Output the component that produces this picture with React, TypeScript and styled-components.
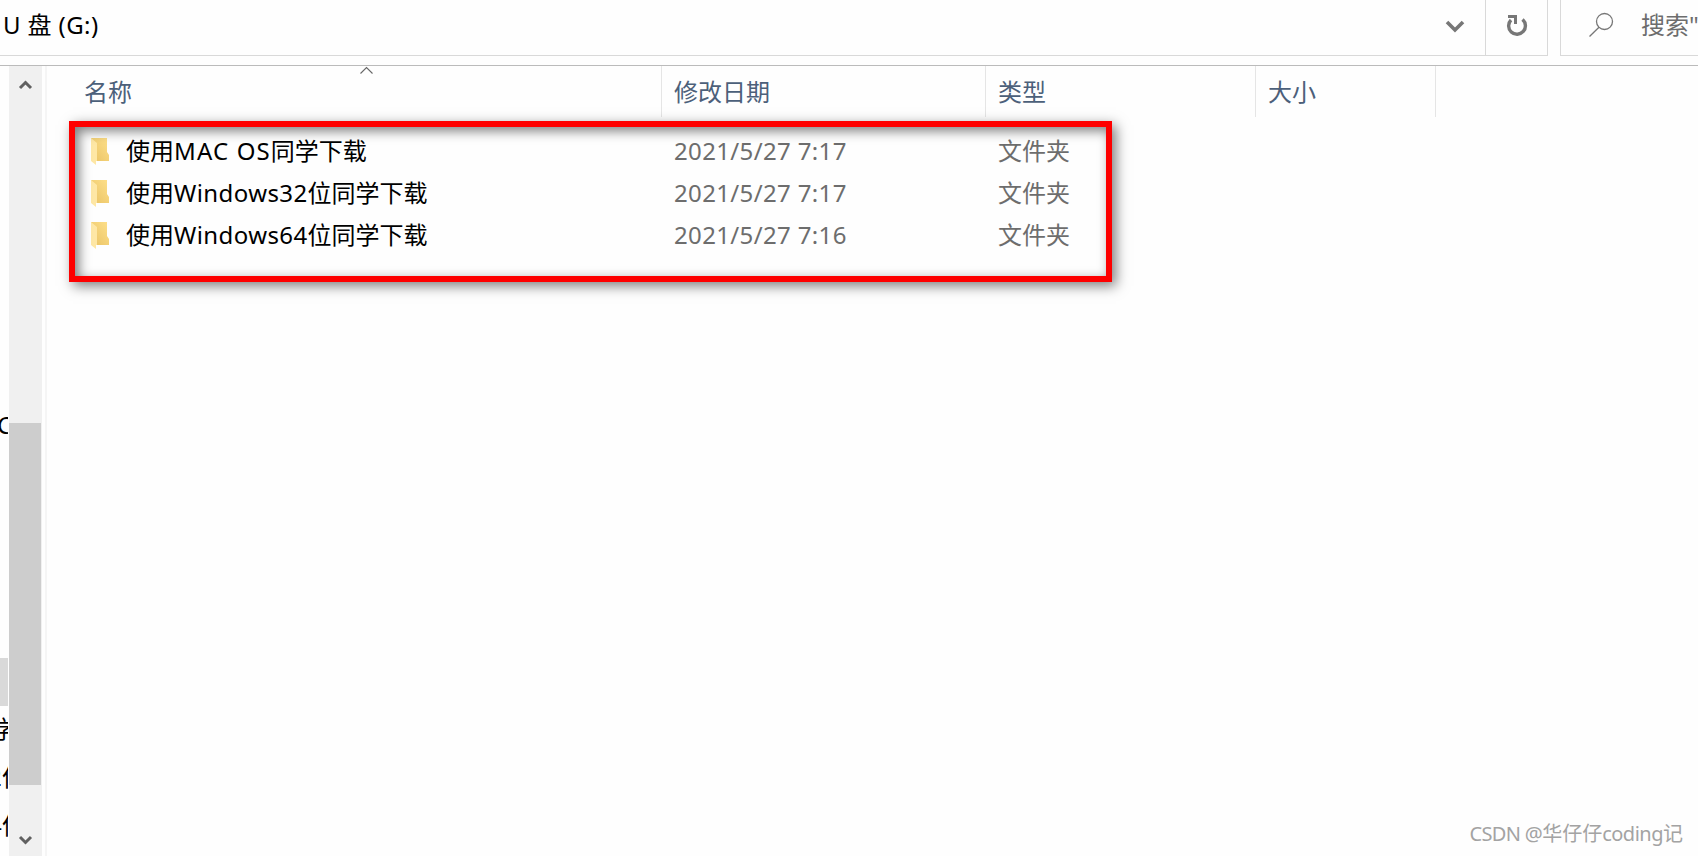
import React from "react";
import styled, { createGlobalStyle, css } from "styled-components";

const files = [
  { prefix: "使用", latin: "MAC OS", suffix: "同学下载", spacing: 1.15, date: "2021/5/27 7:17" },
  { prefix: "使用", latin: "Windows32", suffix: "位同学下载", spacing: 0.4, date: "2021/5/27 7:17" },
  { prefix: "使用", latin: "Windows64", suffix: "位同学下载", spacing: 0.4, date: "2021/5/27 7:16" },
];

const GlobalStyle = createGlobalStyle`
  * {
    box-sizing: border-box;
  }

  body {
    margin: 0;
    overflow: hidden;
    background: #fefefe;
    font-family: "Noto Sans", "Noto Sans CJK SC", sans-serif;
    font-size: 24px;
    color: #000;
  }
`;

const Window = styled.div`
  position: relative;
  display: flex;
  flex-direction: column;
  width: 1698px;
  height: 856px;
  overflow: hidden;
`;

const TopBar = styled.header`
  display: flex;
  gap: 12px;
  height: 66px;
  padding-bottom: 9px;
  border-bottom: 1px solid #bbbbbb;
`;

const AddressBox = styled.div`
  display: flex;
  width: 1548px;
  border: solid #d9d9d9;
  border-width: 0 1px 1px 0;
`;

const Path = styled.span`
  flex: 1;
  padding-left: 3px;
  line-height: 50px;
  letter-spacing: 0.4px;
  white-space: pre;
`;

const BarButton = styled.div<{ $width: number; $divided?: boolean }>`
  display: flex;
  width: ${({ $width }) => $width}px;
  ${({ $divided }) =>
    $divided &&
    css`
      border-left: 1px solid #d9d9d9;
    `}
`;

const SearchBox = styled.div`
  display: flex;
  flex: 1;
  border: solid #d9d9d9;
  border-width: 0 0 1px 1px;
  color: #6d6d6d;
  line-height: 50px;
  white-space: nowrap;
  overflow: hidden;

  > svg {
    width: 80px;
    flex-shrink: 0;
  }
`;

const Main = styled.div`
  display: flex;
  flex: 1;
  min-height: 0;
`;

const Nav = styled.nav`
  width: 9px;
  padding-top: 336px;
  overflow: hidden;
`;

const NavItem = styled.div<{ $shift?: number; $gap?: number }>`
  width: 8px;
  height: 48px;
  margin-bottom: ${({ $gap = 0 }) => $gap}px;
  line-height: 46px;
  text-indent: ${({ $shift = 0 }) => $shift}px;
  white-space: nowrap;
  overflow: hidden;
`;

const SelectedItem = styled(NavItem)`
  background: #d9d9d9;
`;

const ScrollBar = styled.div`
  display: flex;
  flex-direction: column;
  width: 33px;
  background: #f0f0f0;
`;

const ScrollTrack = styled.div`
  flex: 1;
  padding-top: 320px;
`;

const Thumb = styled.div`
  width: 32px;
  height: 362px;
  background: #cdcdcd;
`;

const ScrollArrow = styled.svg`
  display: block;
  width: 33px;
  height: 37px;
`;

const Pane = styled.section`
  flex: 1;
  margin-left: 3px;
  border-left: 2px solid #f5f5f5;
`;

const columns = css`
  display: grid;
  grid-template-columns: 615px 324px 270px 180px;
`;

const ColumnHeader = styled.div`
  ${columns}
  height: 51px;
  color: #4c607a;
`;

const HeaderCell = styled.div<{ $indent?: number }>`
  position: relative;
  padding-left: ${({ $indent = 12 }) => $indent}px;
  border-right: 1px solid #e5e5e5;
  line-height: 51px;
`;

const SortMark = styled.svg`
  position: absolute;
  left: 312px;
  top: 0;
`;

const Rows = styled.div`
  padding-top: 14px;
`;

const Row = styled.div`
  ${columns}
  height: 42px;
  line-height: 40px;
  white-space: nowrap;
`;

const NameCell = styled.div`
  display: flex;
  padding-left: 44px;
`;

const FolderSvg = styled.svg`
  width: 20px;
  height: 28px;
  margin: 7px 15px 0 0;
`;

const DetailCell = styled.div`
  padding-left: 12px;
  color: #6d6d6d;
`;

const Latin = styled.span<{ $spacing: number }>`
  letter-spacing: ${({ $spacing }) => $spacing}px;
`;

const Highlight = styled.div`
  position: absolute;
  left: 69px;
  top: 121px;
  width: 1043px;
  height: 161px;
  border: 6px solid #fe0000;
  box-shadow:
    4px 4px 12px rgba(0, 0, 0, 0.5),
    inset 4px 4px 12px rgba(0, 0, 0, 0.5);
`;

const Watermark = styled.div`
  position: absolute;
  right: 15px;
  bottom: 7px;
  color: #a3a3a3;
  font-size: 20px;
  line-height: 30px;
  white-space: nowrap;
`;

const Folder: React.FC = () => (
  <FolderSvg viewBox="0 0 20 28">
    <defs>
      <linearGradient id="folder" x1="0" y1="1" x2="1" y2="0">
        <stop offset="0" stopColor="#e9c264" />
        <stop offset="1" stopColor="#fee08a" />
      </linearGradient>
    </defs>
    <path d="M0 0H16V14L18 17V23H5Z" fill="url(#folder)" />
    <path d="M0 0L6 5V23H5V27L0 23Z" fill="#fee7a5" />
  </FolderSvg>
);

const App: React.FC = () => (
  <>
    <GlobalStyle />
    <Window>
      <TopBar>
        <AddressBox>
          <Path>U 盘 (G:)</Path>
          <BarButton $width={60}>
            <svg width="60" height="55" fill="none" stroke="#777" strokeWidth="3.6">
              <path d="M22 22L30 30L38 22" />
            </svg>
          </BarButton>
          <BarButton $width={62} $divided>
            <svg width="61" height="55" fill="none" stroke="#777" strokeWidth="3.4">
              <path d="M36.5 19.5A8.4 8.4 0 1 1 25 20" />
              <path d="M22 16.5H29.5V24" strokeWidth="3" />
            </svg>
          </BarButton>
        </AddressBox>
        <SearchBox>
          <svg height="55" fill="none" stroke="#777" strokeWidth="1.3">
            <circle cx="43.5" cy="21.5" r="8" />
            <path d="M38 27.2L28.5 36.5" />
          </svg>
          搜索"
        </SearchBox>
      </TopBar>
      <Main>
        <Nav>
          <NavItem $shift={-3} $gap={208}>C</NavItem>
          <SelectedItem />
          <NavItem $shift={-8}>学</NavItem>
          <NavItem $shift={-12}>2位</NavItem>
          <NavItem $shift={-12}>4位</NavItem>
        </Nav>
        <ScrollBar>
          <ScrollArrow fill="none" stroke="#606060" strokeWidth="3">
            <path d="M11 22L16.5 16.5L22 22" />
          </ScrollArrow>
          <ScrollTrack>
            <Thumb />
          </ScrollTrack>
          <ScrollArrow fill="none" stroke="#606060" strokeWidth="3">
            <path d="M11 18L16.5 23.5L22 18" />
          </ScrollArrow>
        </ScrollBar>
        <Pane>
          <ColumnHeader>
            <HeaderCell $indent={37}>
              名称
              <SortMark width="16" height="9" fill="none" stroke="#666" strokeWidth="1.1">
                <path d="M1.5 7.5L7.5 1.5L13.5 7.5" />
              </SortMark>
            </HeaderCell>
            <HeaderCell>修改日期</HeaderCell>
            <HeaderCell>类型</HeaderCell>
            <HeaderCell>大小</HeaderCell>
          </ColumnHeader>
          <Rows>
            {files.map((file) => (
              <Row key={file.latin}>
                <NameCell>
                  <Folder />
                  <span>
                    {file.prefix}
                    <Latin $spacing={file.spacing}>{file.latin}</Latin>
                    {file.suffix}
                  </span>
                </NameCell>
                <DetailCell>
                  <Latin $spacing={0.35}>{file.date}</Latin>
                </DetailCell>
                <DetailCell>文件夹</DetailCell>
              </Row>
            ))}
          </Rows>
        </Pane>
      </Main>
      <Highlight />
      <Watermark>
        <Latin $spacing={-0.65}>CSDN @</Latin>
        华仔仔
        <Latin $spacing={-0.5}>coding</Latin>记
      </Watermark>
    </Window>
  </>
);

export default App;
